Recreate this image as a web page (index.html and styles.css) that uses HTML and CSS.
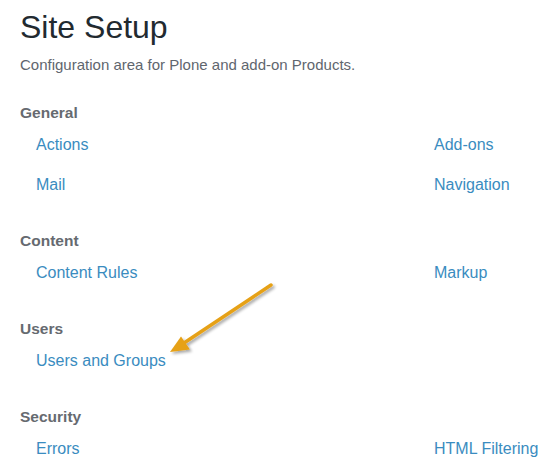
FILE: index.html
```html
<!DOCTYPE html>
<html>
<head>
<meta charset="utf-8">
<link rel="stylesheet" href="styles.css">
</head>
<body>
<main class="page">
  <h1 class="title">Site Setup</h1>
  <p class="desc">Configuration area for Plone and add-on Products.</p>

  <section class="group">
    <h2 class="group-title">General</h2>
    <ul class="links">
      <li><a href="#">Actions</a></li>
      <li><a href="#">Add-ons</a></li>
      <li><a href="#">Mail</a></li>
      <li><a href="#">Navigation</a></li>
    </ul>
  </section>

  <section class="group">
    <h2 class="group-title">Content</h2>
    <ul class="links">
      <li><a href="#">Content Rules</a></li>
      <li><a href="#">Markup</a></li>
    </ul>
  </section>

  <section class="group">
    <h2 class="group-title">Users</h2>
    <ul class="links">
      <li><a href="#">Users and Groups</a></li>
    </ul>
  </section>

  <section class="group">
    <h2 class="group-title">Security</h2>
    <ul class="links">
      <li><a href="#">Errors</a></li>
      <li><a href="#">HTML Filtering</a></li>
    </ul>
  </section>

  <svg class="arrow" width="559" height="475" viewBox="0 0 559 475">
    <defs>
      <filter id="sh" x="-20%" y="-20%" width="140%" height="140%">
        <feGaussianBlur in="SourceAlpha" stdDeviation="1.5"/>
        <feOffset dx="1.5" dy="2" result="b"/>
        <feComponentTransfer><feFuncA type="linear" slope="0.35"/></feComponentTransfer>
        <feMerge><feMergeNode/><feMergeNode in="SourceGraphic"/></feMerge>
      </filter>
    </defs>
    <g filter="url(#sh)">
      <line x1="271" y1="285" x2="184" y2="343" stroke="#e6a117" stroke-width="3.5" stroke-linecap="round"/>
      <polygon points="170,352 181,336.5 190,349.5" fill="#e6a117"/>
    </g>
  </svg>
</main>
</body>
</html>
```

FILE: styles.css
```css
html, body {
  margin: 0;
  padding: 0;
  background: #fff;
}

.page {
  position: relative;
  width: 559px;
  height: 475px;
  overflow: hidden;
  padding: 0 20px;
  box-sizing: border-box;
  font-family: "Liberation Sans", Arial, sans-serif;
}

.title {
  margin: 9px 0 0;
  font-size: 32px;
  line-height: 36px;
  font-weight: normal;
  color: #222a30;
}

.desc {
  margin: 10px 0 0;
  font-size: 15px;
  line-height: 20px;
  color: #5f666e;
}

.group {
  margin-top: 28px;
}

.group + .group {
  margin-top: 36.5px;
}

.group-title {
  margin: 0 0 11.5px;
  font-size: 15.5px;
  line-height: 20px;
  font-weight: bold;
  color: #666a70;
}

.links {
  list-style: none;
  margin: 0;
  padding: 0 0 0 16px;
  display: grid;
  grid-template-columns: 398px auto;
  row-gap: 20px;
}

.links li {
  font-size: 16px;
  line-height: 20px;
  white-space: nowrap;
}

.links a {
  color: #3a8cc0;
  text-decoration: none;
}

.arrow {
  position: absolute;
  left: 0;
  top: 0;
  pointer-events: none;
}
```
